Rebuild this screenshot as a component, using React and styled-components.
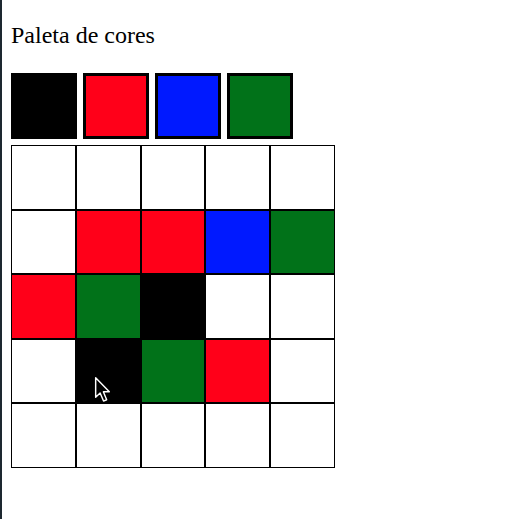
import React from 'react';
import styled, { createGlobalStyle } from 'styled-components';

const GlobalStyle = createGlobalStyle`
    html {
        border-left: 2px solid #1d2830;
        min-height: 100vh;
        box-sizing: border-box;
        background: #fff;
    }
    body {
        margin: 0;
        padding: 22px 9px 0;
        font-family: "Liberation Serif", "Times New Roman", serif;
        color: #000;
    }
`;

const Title = styled.h1`
    margin: 0 0 25px;
    font-size: 24px;
    font-weight: normal;
    line-height: 26px;
`;

const Palette = styled.div`
    display: flex;
    gap: 6px;
    margin-bottom: 6px;
`;

const Swatch = styled.div`
    width: 60px;
    height: 60px;
    border: 3px solid #000;
    background-color: ${(p) => p.$color};
`;

const Board = styled.div`
    position: relative;
    display: grid;
    grid-template-columns: repeat(5, 64.8px);
    grid-auto-rows: 64.6px;
    width: 324px;
`;

const Pixel = styled.div`
    border: 1px solid #000;
    background-color: ${(p) => p.$color};
`;

const Cursor = styled.svg`
    position: absolute;
    left: 83px;
    top: 231px;
    width: 20px;
    height: 29px;
    pointer-events: none;
`;

const RED = '#ff0019';
const BLUE = '#0019ff';
const GREEN = '#017219';
const W = '#fff';
const K = '#000';

const palette = [K, RED, BLUE, GREEN];

const board = [
    [W, W, W, W, W],
    [W, RED, RED, BLUE, GREEN],
    [RED, GREEN, K, W, W],
    [W, K, GREEN, RED, W],
    [W, W, W, W, W],
];

const App = () => {
    return (
        <>
            <GlobalStyle />
            <Title>Paleta de cores</Title>
            <Palette>
                {palette.map((c, i) => (
                    <Swatch key={i} $color={c} />
                ))}
            </Palette>
            <Board>
                {board.flat().map((c, i) => (
                    <Pixel key={i} $color={c} />
                ))}
                <Cursor viewBox="0 0 18 26">
                    <path
                        d="M1.5 1.5 L1.5 19 L5.5 15.2 L8.6 22.5 L11.4 21.3 L8.4 14.2 L13.8 14.2 Z"
                        fill="#000"
                        stroke="#fff"
                        strokeWidth="1.3"
                        strokeLinejoin="round"
                    />
                </Cursor>
            </Board>
        </>
    );
};

export default App;
